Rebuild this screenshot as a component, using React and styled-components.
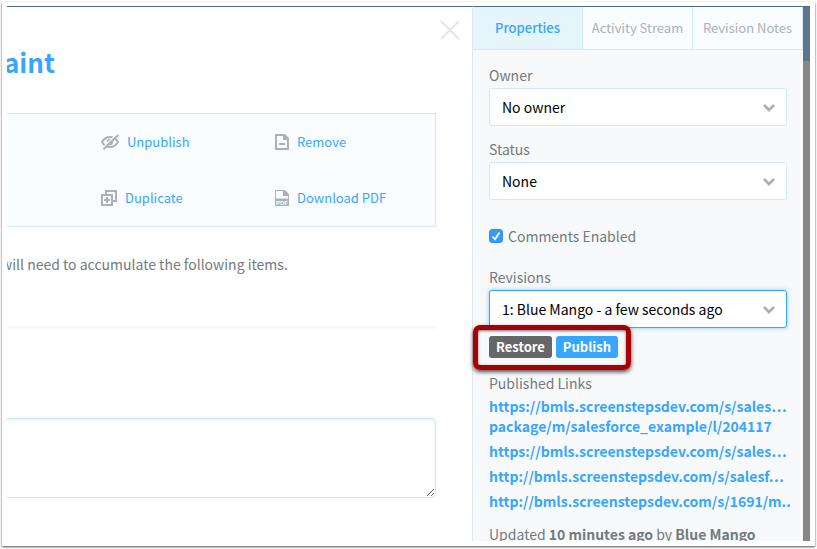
import React, {useState} from 'react';
import styled, {createGlobalStyle} from 'styled-components';

function EyeOffIcon() {
    return (
        <svg width="18" height="16" viewBox="0 0 18 16" fill="none" stroke="#adb0b6">
            <path d="M1 8C3 4.600 5.800 3 9 3s6 1.600 8 5c-2 3.400-4.800 5-8 5s-6-1.600-8-5z" strokeWidth="2" />
            <circle cx="9" cy="8" r="3.200" fill="#adb0b6" stroke="none" />
            <path d="M1.600 13.900L15.800 0.200" stroke="#f9fdff" strokeWidth="1.400" />
            <path d="M2.400 15.300L17.300 1" strokeWidth="2" />
        </svg>
    );
}

function DuplicateIcon() {
    return (
        <svg width="16" height="16" viewBox="0 0 16 16" fill="none" stroke="#adb0b6" strokeWidth="2">
            <path d="M5 4V1h10v10h-3" />
            <path d="M1 5h10v10H1z" />
            <path d="M6 7v6M3 10h6" />
        </svg>
    );
}

function RemoveIcon() {
    return (
        <svg width="14" height="16" viewBox="0 0 14 16" fill="none" stroke="#adb0b6" strokeWidth="2">
            <path d="M1 1h8l4 4v10H1z" />
            <path d="M8 0h2l4 4v2H8z" fill="#adb0b6" stroke="none" />
            <path d="M4 10h6" />
        </svg>
    );
}

function PdfIcon() {
    return (
        <svg width="14" height="16" viewBox="0 0 14 16">
            <path d="M0.500 9V0.500h8.500l4.500 4.500v4" fill="none" stroke="#adb0b6" />
            <path d="M8 0h2l4 4v2H8z" fill="#adb0b6" />
            <path d="M0 8.500h14V16H0z" fill="#adb0b6" />
            <text x="7" y="14.500" textAnchor="middle" fontSize="6" fontWeight="700" fontFamily="Liberation Sans, sans-serif" fill="#fff">PDF</text>
        </svg>
    );
}

function Select({id, label, value, focused}) {
    return (
        <Field>
            <Label htmlFor={id}>{label}</Label>
            <SelectBox>
                <StyledSelect id={id} $focused={focused}>
                    <option>{value}</option>
                </StyledSelect>
                <Chevron width="12" height="8" viewBox="0 0 12 8">
                    <path d="M1 1l5 5 5-5" fill="none" stroke="#adb0b6" strokeWidth="2.800" />
                </Chevron>
            </SelectBox>
        </Field>
    );
}

const actions = [
    {label: 'Unpublish', icon: <EyeOffIcon />},
    {label: 'Remove', icon: <RemoveIcon />},
    {label: 'Duplicate', icon: <DuplicateIcon />},
    {label: 'Download PDF', icon: <PdfIcon />},
];

const tabs = ['Properties', 'Activity Stream', 'Revision Notes'];

const links = [
    ['https://bmls.screenstepsdev.com/s/sales…', 'package/m/salesforce_example/l/204117'],
    ['https://bmls.screenstepsdev.com/s/sales…'],
    ['http://bmls.screenstepsdev.com/s/salesf…'],
    ['http://bmls.screenstepsdev.com/s/1691/m..'],
];

function App() {
    const [comments, setComments] = useState(true);
    const [tab, setTab] = useState('Properties');

    return (
        <>
            <GlobalStyle />
            <Frame>
                <Screen>
                    <Main>
                        <Header>
                            <Title>aint</Title>
                            <CloseButton aria-label="Close">
                                <svg width="20" height="20" viewBox="0 0 20 20" stroke="#e4e5e7" strokeWidth="2">
                                    <path d="M1 1l18 18M19 1L1 19" />
                                </svg>
                            </CloseButton>
                        </Header>
                        <Actions>
                            {actions.map(({label, icon}) => (
                                <ActionLink href="#" key={label}>{icon}{label}</ActionLink>
                            ))}
                        </Actions>
                        <Intro>will need to accumulate the following items.</Intro>
                        <Divider />
                        <Notes aria-label="Notes" />
                    </Main>
                    <Sidebar>
                        <Tabs>
                            {tabs.map((name) => (
                                <Tab key={name} $active={name === tab} onClick={() => setTab(name)}>{name}</Tab>
                            ))}
                        </Tabs>
                        <Properties>
                            <Select id="owner" label="Owner" value="No owner" />
                            <Select id="status" label="Status" value="None" />
                            <CheckLabel>
                                <CheckBox>
                                    <input
                                        type="checkbox"
                                        checked={comments}
                                        onChange={(e) => setComments(e.target.checked)}
                                    />
                                    {comments && (
                                        <svg width="14" height="14" viewBox="0 0 14 14">
                                            <path d="M3.500 7.500l2.500 2.800 4.500-6.800" fill="none" stroke="#fff" strokeWidth="1.800" />
                                        </svg>
                                    )}
                                </CheckBox>
                                Comments Enabled
                            </CheckLabel>
                            <Select id="revisions" label="Revisions" value="1: Blue Mango - a few seconds ago" focused />
                            <RevisionActions>
                                <SmallButton $color="#666">Restore</SmallButton>
                                <SmallButton $color="#37a6ff">Publish</SmallButton>
                            </RevisionActions>
                            <Label as="h2">Published Links</Label>
                            <LinkList>
                                {links.map((lines, i) => (
                                    <li key={i}>
                                        <a href="#">
                                            {lines.map((line) => <span key={line}>{line}</span>)}
                                        </a>
                                    </li>
                                ))}
                            </LinkList>
                            <Updated>Updated <b>10 minutes ago</b> by <b>Blue Mango</b></Updated>
                        </Properties>
                    </Sidebar>
                    <Backdrop />
                </Screen>
            </Frame>
        </>
    );
}

const GlobalStyle = createGlobalStyle`
    * {
        box-sizing: border-box;
    }
    body {
        margin: 0;
        background: #fff;
        color: #727b7b;
        font-family: "Noto Sans CJK SC", "Noto Sans", sans-serif;
        font-size: 14px;
        line-height: 22px;
    }
    button, select, textarea {
        font: inherit;
    }
    a {
        color: #37a6ff;
        text-decoration: none;
    }
    svg {
        flex: none;
    }
`;

const Frame = styled.div`
    height: 100vh;
    padding: 2px 2px 3px;
    overflow: hidden;

    &::before {
        content: '';
        position: absolute;
        inset: 2px 2px 3px;
        box-shadow: 0 1px 2px rgba(0, 0, 0, 0.7);
        pointer-events: none;
    }
`;

const Screen = styled.div`
    display: flex;
    height: 100%;
    border: solid #fff;
    border-width: 4px 5px 5px;
    overflow: hidden;
`;

const Main = styled.main`
    flex: 1;
    min-width: 0;
    border-top: 1px solid #4a6b80;
    overflow: hidden;
`;

const Header = styled.header`
    display: flex;
    justify-content: space-between;
    align-items: flex-start;
    height: 106px;
    padding: 13px 12px 0 0;
`;

const Title = styled.h1`
    margin: 18px 0 0 -3px;
    color: #37a6ff;
    font-size: 26px;
    font-weight: 700;
    line-height: 48px;
`;

const CloseButton = styled.button`
    display: flex;
    padding: 0;
    border: 0;
    background: none;
    cursor: pointer;
`;

const Actions = styled.nav`
    display: grid;
    grid-template-columns: 174px 160px;
    grid-auto-rows: 56px;
    justify-content: end;
    margin-right: 36px;
    border: 1px solid #cfeafa;
    border-left: 0;
    background: #f9fdff;
`;

const ActionLink = styled.a`
    display: flex;
    align-items: center;
    gap: 8px;
    font-size: 13px;
`;

const Intro = styled.p`
    margin: 26px 0 0 -6px;
`;

const Divider = styled.hr`
    height: 3px;
    margin: 51px 36px 0 0;
    border: 0;
    background: #f7f9fc;
`;

const Notes = styled.textarea`
    display: block;
    width: calc(100% - 26px);
    height: 80px;
    margin: 89px 0 0 -10px;
    border: 1px solid #cfe6f7;
    border-radius: 4px;
    box-shadow: inset 0 1px 3px rgba(55, 120, 255, 0.15);
    outline: 0;
`;

const Sidebar = styled.aside`
    flex: 0 0 331px;
    min-width: 0;
    border-top: 1px solid #4a6b80;
    border-left: 1px solid #dfe8f0;
    background: #f7f9fb;
`;

const Tabs = styled.div`
    display: grid;
    grid-template-columns: repeat(3, 1fr);
`;

const Tab = styled.button`
    height: 43px;
    padding: 0;
    border: solid #cfeafa;
    border-width: 0 1px 1px 0;
    background: ${({$active}) => ($active ? '#e6f5fb' : '#f9fdff')};
    color: ${({$active}) => ($active ? '#37a6ff' : '#adb0b6')};
    font-size: 13px;
    font-weight: ${({$active}) => ($active ? 500 : 400)};
    white-space: nowrap;
`;

const Properties = styled.div`
    padding: 14px 16px 0;
`;

const Field = styled.div`
    margin-bottom: 12px;
`;

const Label = styled.label`
    display: block;
    margin: 0 0 2px;
    font-size: 14px;
    font-weight: 400;
`;

const SelectBox = styled.div`
    position: relative;
`;

const StyledSelect = styled.select`
    display: block;
    width: 100%;
    height: 38px;
    padding: 0 36px 0 12px;
    appearance: none;
    border: 1px solid ${({$focused}) => ($focused ? '#37a6ff' : '#cfeafa')};
    border-radius: 3px;
    box-shadow: ${({$focused}) => ($focused ? '0 0 4px rgba(55, 166, 255, 0.6)' : 'none')};
    background: #fff;
    color: #000;
    outline: 0;
`;

const Chevron = styled.svg`
    position: absolute;
    top: 16px;
    right: 12px;
    pointer-events: none;
`;

const CheckLabel = styled.label`
    display: flex;
    align-items: center;
    gap: 5px;
    margin: 25px 0 19px;
`;

const CheckBox = styled.span`
    display: grid;

    input, svg {
        grid-area: 1 / 1;
        width: 14px;
        height: 14px;
        margin: 0;
    }
    input {
        appearance: none;
        border: 1px solid #2f8ffb;
        border-radius: 3px;
        background: #fff;
    }
    input:checked {
        background: #3a97fc;
    }
    svg {
        pointer-events: none;
    }
`;

const RevisionActions = styled.div`
    position: relative;
    display: flex;
    gap: 4px;
    width: fit-content;
    margin: -4px 0 14px;

    &::after {
        content: '';
        position: absolute;
        inset: -11px -13px -12px -16px;
        border: 5px solid #a90004;
        border-radius: 7px;
        box-shadow: 0 2px 4px rgba(0, 0, 0, 0.7), inset 0 1px 3px rgba(0, 0, 0, 0.5);
        pointer-events: none;
    }
`;

const SmallButton = styled.button`
    height: 22px;
    padding: 0 7px;
    border: 0;
    border-radius: 3px;
    background: ${({$color}) => $color};
    color: #fff;
    font-size: 13px;
    font-weight: 700;
    line-height: 20px;
`;

const LinkList = styled.ul`
    display: grid;
    gap: 5px;
    margin: 0;
    padding: 0;
    list-style: none;
    font-weight: 700;
    line-height: 20px;
    white-space: nowrap;

    span {
        display: block;
    }
`;

const Updated = styled.p`
    margin: 12px 0 0;

    b {
        font-weight: 700;
    }
`;

const Backdrop = styled.div`
    flex: 0 0 7px;
    border-top: 1px solid #4a6b80;
    background: linear-gradient(#5f758b 54px, #878787 54px);
`;

export default App;
